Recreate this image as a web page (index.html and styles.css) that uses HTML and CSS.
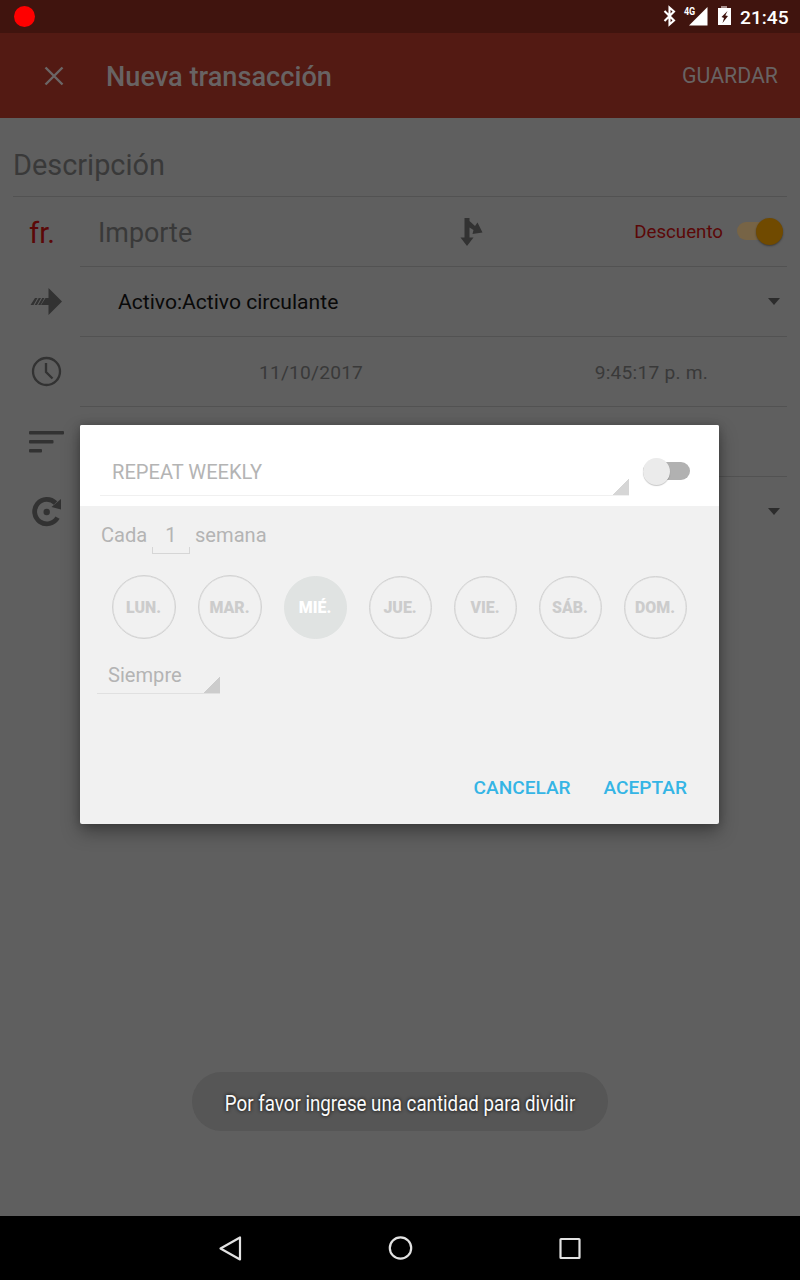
FILE: index.html
```html
<!DOCTYPE html>
<html lang="es">
<head>
<meta charset="utf-8">
<title>Nueva transacción</title>
<link rel="stylesheet" href="styles.css">
</head>
<body>
<div class="screen">
  <header class="status">
    <span class="record"></span>
    <svg class="status-icons" width="72" height="33" viewBox="0 0 72 33">
      <path d="M3.500 11l9.500 9.500-4.500 4V7.500l4.500 4-9.500 9.500" fill="none" stroke="#fff" stroke-width="2.100"/>
      <text x="25.500" y="15" transform="scale(.9 1)" class="net">4G</text>
      <path d="M28 25.500L46.500 7v18.500z" fill="#fff"/>
      <path d="M60 6h6v2h-6z" fill="#a98f8c"/>
      <path d="M57 8h13v17h-13z" fill="#fff"/>
      <path d="M66.500 11l-6 6 2.500 1-1.500 5 5.500-7-2.700-.500 2.200-4.500z" fill="#40140e"/>
    </svg>
    <span class="clock">21:45</span>
  </header>
  <div class="appbar">
    <svg class="close" width="20" height="20" viewBox="0 0 20 20"><path d="M1.500 1.500l17 17M18.500 1.500l-17 17" stroke="#6b6666" stroke-width="2.400"/></svg>
    <h1 class="title">Nueva transacción</h1>
    <span class="save">GUARDAR</span>
  </div>
  <main class="form">
    <div class="desc"><span>Descripción</span></div>
    <div class="row">
      <div class="lead"><span class="currency">fr.</span></div>
      <div class="field">
        <span class="amount">Importe</span>
        <svg class="split" width="24" height="30" viewBox="0 0 24 30"><path d="M4.500 1h5v3l5.500 5 2.500-3.500 5 10-10 1.500 1-4-4-2.500v10h4L7 29 .5 20.500h4z" fill="#323232"/></svg>
        <span class="debit">Descuento</span>
        <span class="switch on"><i></i></span>
      </div>
    </div>
    <div class="row">
      <div class="lead"><svg class="arrow" width="34" height="28" viewBox="0 0 34 28"><path d="M18.500 1l13.500 13.500L18.500 28V18h-7.500l4.500-7h3zM5 11h2.500L3.500 18H.5zM8.700 11h2.300l-4 7H4.700zM12.200 11h2.300l-4 7H8.200z" fill="#323232"/></svg></div>
      <div class="field"><span class="account">Activo:Activo circulante</span><i class="caret"></i></div>
    </div>
    <div class="row">
      <div class="lead"><svg width="32" height="32" viewBox="0 0 32 32" fill="none" stroke="#323232"><circle cx="15.500" cy="15.500" r="13.500" stroke-width="2.300"/><path d="M15 7v9l6.500 6.500" stroke-width="2.300"/></svg></div>
      <div class="field"><span class="date">11/10/2017</span><span class="time">9:45:17 p. m.</span></div>
    </div>
    <div class="row">
      <div class="lead"><svg width="36" height="24" viewBox="0 0 36 24" fill="#323232"><rect x="0" y="1" width="35" height="3.500" rx="1"/><rect x="0" y="10" width="24.500" height="3.500" rx="1"/><rect x="0" y="19" width="13" height="3.500" rx="1"/></svg></div>
      <div class="field"></div>
    </div>
    <div class="row last">
      <div class="lead"><svg width="32" height="32" viewBox="0 0 32 32"><path d="M26.500 21.600A12.200 12.200 0 1 1 24.500 7" fill="none" stroke="#323232" stroke-width="4.800"/><path d="M30 3v10.500l-9.500-2.500z" fill="#323232"/><circle cx="15.700" cy="16" r="3.200" fill="#323232"/></svg></div>
      <div class="field"><i class="caret"></i></div>
    </div>
  </main>
  <nav class="navbar">
    <svg width="24" height="28" viewBox="0 0 24 28"><path d="M2.500 14.500L22 3.500v22z"/></svg>
    <svg width="26" height="28" viewBox="0 0 26 28"><circle cx="13.500" cy="14" r="10.700"/></svg>
    <svg width="24" height="28" viewBox="0 0 24 28"><rect x="2.500" y="5" width="19" height="19" rx=".500"/></svg>
  </nav>

  <section class="dialog">
    <div class="dialog-head">
      <div class="freq"><span>REPEAT WEEKLY</span></div>
      <span class="switch off"><i></i></span>
    </div>
    <div class="dialog-body">
      <div class="every"><span class="cada">Cada</span><span class="count">1</span><span class="semana">semana</span></div>
      <div class="days">
        <span class="day wide">LUN.</span><span class="day wide">MAR.</span><span class="day active">MIÉ.</span><span class="day">JUE.</span><span class="day">VIE.</span><span class="day">SÁB.</span><span class="day">DOM.</span>
      </div>
      <div class="until"><span>Siempre</span></div>
      <div class="actions"><span class="cancel">CANCELAR</span><span class="accept">ACEPTAR</span></div>
    </div>
  </section>
  <div class="toast"><span>Por favor ingrese una cantidad para dividir</span></div>
</div>
</body>
</html>
```
FILE: styles.css
```css
* { box-sizing: border-box; }
body { margin: 0; font-family: Roboto, "Liberation Sans", sans-serif; }
svg { display: block; flex: none; }
span { white-space: nowrap; }
.screen { position: relative; width: 800px; height: 1280px; display: flex; flex-direction: column; background: #5f5f5f; overflow: hidden; }

.status { height: 33px; flex: none; background: #40140e; display: flex; align-items: center; padding: 0 11px 0 14px; color: #fff; }
.record { width: 21px; height: 21px; border-radius: 50%; background: #f00; }
.status-icons { margin-left: auto; margin-right: 7px; }
.net { font-size: 10px; font-weight: 700; fill: #fff; }
.clock { font-size: 19.200px; font-weight: 500; width: 49px; padding-top: 2px; }

.appbar { height: 85px; flex: none; background: #531a13; display: flex; align-items: center; padding: 0 22px 0 44px; color: #686363; }
.title { margin: 0 auto 0 42px; font-size: 27.200px; font-weight: 500; padding-top: 2px; }
.save { font-size: 21.300px; }

.form { flex: 1; padding: 0 13px; color: #393939; }
.desc { height: 79px; border-bottom: 1px solid #525252; display: flex; align-items: center; font-size: 28.900px; padding-top: 15px; }
.row { height: 70px; display: flex; }
.lead { width: 67px; flex: none; display: flex; align-items: center; justify-content: center; }
.field { flex: 1; display: flex; align-items: center; border-bottom: 1px solid #525252; }
.last .field { border-bottom: 0; }
.currency { font-size: 29.300px; color: #5b0808; margin-right: 9px; padding-top: 2px; }
.arrow { margin-bottom: 2px; }
.amount { font-size: 26.900px; width: 362px; padding: 3px 0 0 18px; }
.split { margin-left: 18px; margin-top: 1px; }
.debit { margin-left: auto; font-size: 18.700px; color: #5b0808; }
.account { color: #090909; font-size: 21.100px; margin-left: 38px; padding-bottom: 1px; }
.caret { margin: 0 7px 1px auto; border: solid transparent; border-width: 7px 6.500px 0; border-top-color: #2c2c2c; }
.date { font-size: 19.200px; margin-left: 179px; letter-spacing: .2px; padding-top: 2px; }
.time { font-size: 19.200px; margin-left: auto; margin-right: 79px; letter-spacing: .22px; padding-top: 2px; }

.switch { display: flex; align-items: center; width: 46px; height: 18px; border-radius: 9px; }
.switch i { width: 27px; height: 27px; flex: none; border-radius: 50%; }
.switch.on { margin: 0 4px 1px 14px; background: #776446; justify-content: flex-end; }
.switch.on i { background: #704a00; box-shadow: 0 1px 2px rgba(0, 0, 0, .4); }
.switch.off { background: #b1b1b1; }
.switch.off i { background: #ebebeb; box-shadow: 0 1px 1px rgba(0, 0, 0, .22); }

.navbar { height: 64px; flex: none; background: #000; display: flex; justify-content: space-between; align-items: center; padding: 0 218px; fill: none; stroke: #e2e2e2; stroke-width: 2.200px; stroke-linejoin: round; }

.dialog { position: absolute; left: 80px; top: 425px; width: 639px; height: 399px; display: flex; flex-direction: column; border-radius: 2px; overflow: hidden; background: #f1f1f1; color: #b4b4b4; font-size: 20.100px; box-shadow: 0 8px 18px rgba(0, 0, 0, .34), 0 0 8px rgba(0, 0, 0, .2); }
.dialog-head { height: 81px; flex: none; background: #fff; display: flex; align-items: flex-start; padding: 0 29px 0 20px; }
.freq { width: 529px; height: 71px; padding: 35px 0 0 12px; border-bottom: 1px solid #f0f0f0; background: linear-gradient(135deg, transparent 50%, #d6d6d6 50%) right bottom / 16px 16px no-repeat; }
.dialog-head .switch { width: 47px; margin: 37px 0 0 auto; }
.dialog-body { flex: 1; display: flex; flex-direction: column; }
.every { height: 69px; display: flex; align-items: flex-start; padding: 17px 0 0 21px; }
.cada { width: 51px; }
.count { width: 38px; height: 31px; text-align: center; background: linear-gradient(#d6d6d6, #d6d6d6) left bottom / 1px 6px no-repeat, linear-gradient(#d6d6d6, #d6d6d6) right bottom / 1px 6px no-repeat; border-bottom: 1px solid #d6d6d6; }
.semana { margin-left: 5px; }
.days { height: 64px; display: flex; align-items: flex-end; gap: 22px; padding-left: 32px; font-size: 15.900px; font-weight: 900; color: #ccc; }
.day { width: 63px; height: 63px; flex: none; border: 1px solid #d2d2d2; padding-right: 1px; border-radius: 50%; display: flex; align-items: center; justify-content: center; box-shadow: inset 0 0 0 .5px #dcdcdc; }
.wide { width: 64px; height: 64px; }
.active { background: #e0e3e2; border-color: #e0e3e2; box-shadow: none; color: #fff; }
.until { width: 123px; height: 38px; margin: 17px 0 0 17px; padding: 7px 0 0 11px; border-bottom: 1px solid #e0e0e0; background: linear-gradient(135deg, transparent 50%, #ccc 50%) right bottom / 16px 16px no-repeat; }
.actions { margin: auto 32px 25px auto; display: flex; gap: 33px; color: #35b5e5; font-size: 19.100px; font-weight: 500; }

.toast { position: absolute; left: 192px; top: 1072px; width: 416px; height: 59px; border-radius: 30px; background: #565656; color: #fafafa; display: flex; align-items: center; justify-content: center; font-size: 21.600px; padding-top: 3px; text-shadow: 0 0 4px #000; }
.toast span { transform: scaleX(.867); }
```
